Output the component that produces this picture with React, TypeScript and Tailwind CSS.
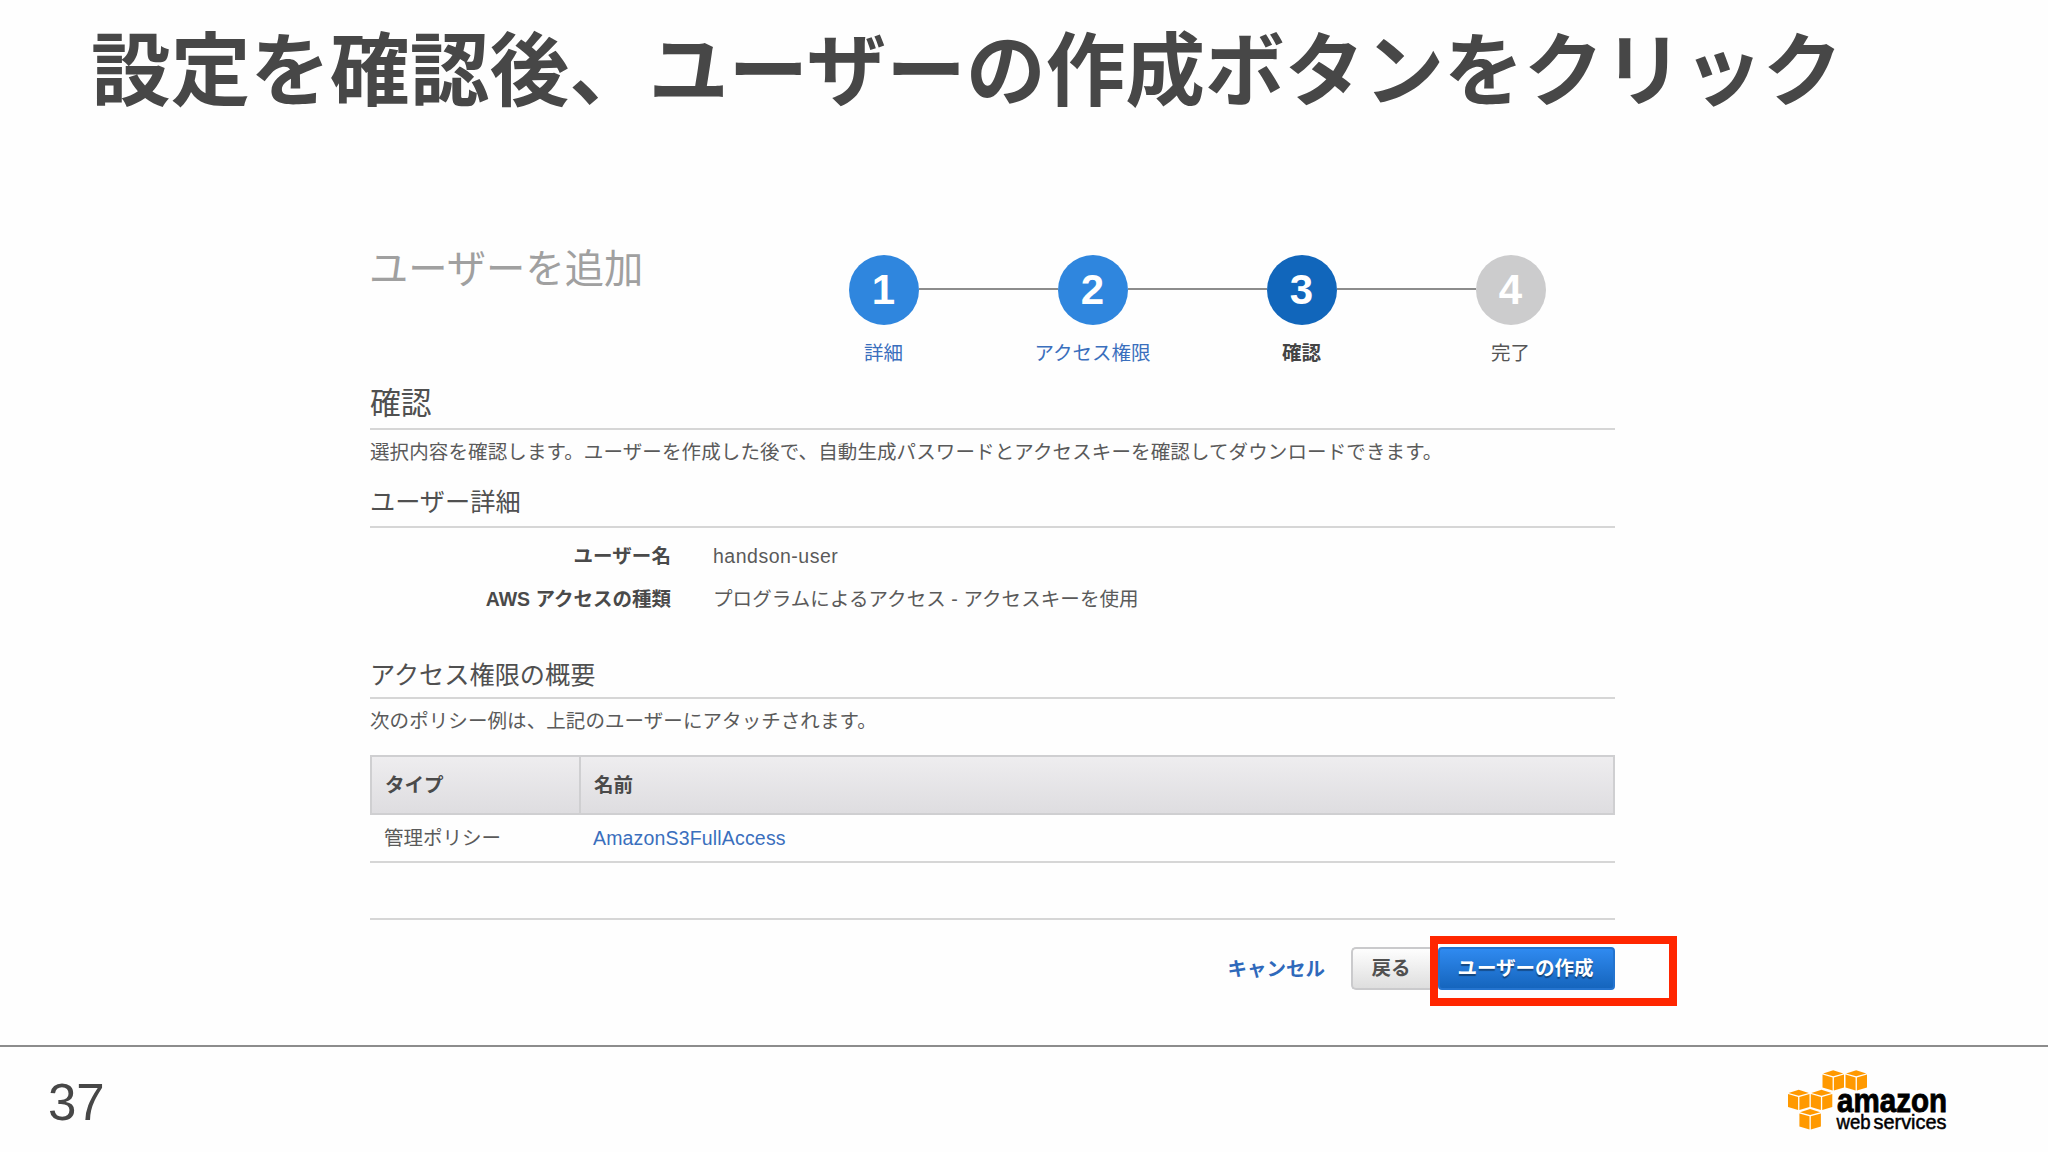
import React from 'react';

interface Step {
  num: number;
  label: string;
  circle: string;
  text: string;
}

const steps: Step[] = [
  { num: 1, label: '詳細', circle: 'bg-[#2f86de]', text: 'text-[#3a6fbd]' },
  { num: 2, label: 'アクセス権限', circle: 'bg-[#2f86de]', text: 'text-[#3a6fbd]' },
  { num: 3, label: '確認', circle: 'bg-[#1166bb]', text: 'text-[#444] font-bold' },
  { num: 4, label: '完了', circle: 'bg-[#cccccd]', text: 'text-[#555]' },
];

const cubes = [
  [34.5, 0],
  [57.5, 0],
  [0, 19.5],
  [22.8, 19.5],
  [11.4, 38.8],
];

const Stepper: React.FC = () => (
  <div className="flex w-[836px]">
    {steps.map((step, i) => (
      <div key={step.num} className="flex w-[209px] flex-col items-center">
        <div className="flex h-[70px] w-full items-center">
          <div className={i === 0 ? 'h-[2px] flex-1' : 'mb-[2px] h-[2px] flex-1 bg-[#8c8c8c]'} />
          <div
            className={`flex h-[70px] w-[70px] items-center justify-center rounded-full pb-[2px] text-[42px] font-bold text-white ${step.circle}`}
          >
            {step.num}
          </div>
          <div className={i === 3 ? 'h-[2px] flex-1' : 'mb-[2px] h-[2px] flex-1 bg-[#8c8c8c]'} />
        </div>
        <div className={`mt-[14px] h-7 leading-7 ${step.text}`}>{step.label}</div>
      </div>
    ))}
  </div>
);

const Logo: React.FC = () => (
  <svg className="h-[66px] w-[164px] overflow-visible" viewBox="0 0 164 66">
    {cubes.map(([x, y]) => (
      <g key={`${x}-${y}`} transform={`translate(${x} ${y})`} fill="#ff9900">
        <path d="M0.6 3.4 10.7 0.2 20.8 3.4 10.7 6.2Z" />
        <path d="M0 4.6 10.1 7.4V20.6L0 17.6Z" />
        <path d="M21.5 4.6 11.4 7.4V20.6L21.5 17.6Z" />
      </g>
    ))}
    <text
      x="49"
      y="41.5"
      fontSize="34"
      fontWeight="700"
      textLength="110"
      lengthAdjust="spacingAndGlyphs"
      stroke="#000"
      strokeWidth="0.9"
    >
      amazon
    </text>
    <text x="48.5" y="59" fontSize="20.5" textLength="34" lengthAdjust="spacingAndGlyphs" stroke="#000" strokeWidth="0.5">
      web
    </text>
    <text x="85.5" y="59" fontSize="20.5" textLength="73" lengthAdjust="spacingAndGlyphs" stroke="#000" strokeWidth="0.5">
      services
    </text>
  </svg>
);

export default function App() {
  return (
    <div className="flex h-[1152px] w-[2048px] flex-col overflow-hidden bg-[#fefefe] font-['Liberation_Sans','Noto_Sans_CJK_JP',sans-serif] text-[19.5px] text-[#5a5a5a]">
      <h1 className="ml-[91px] mt-[12px] h-[120px] whitespace-nowrap text-[79.7px] leading-[120px] font-bold text-[#474747]">
        設定を確認後、ユーザーの作成ボタンをクリック
      </h1>

      <main className="ml-[370px] mt-[98px] flex h-[815px] w-[1245px] flex-col">
        <div className="flex h-[149px] pt-[25px]">
          <h2 className="-ml-[1px] h-[30px] w-[410px] whitespace-nowrap text-[39.3px] leading-[29px] text-[#a0a0a0]">
            ユーザーを追加
          </h2>
          <Stepper />
        </div>

        <h3 className="h-[51px] border-b-2 border-[#d6d6d6] text-[30.8px] leading-[50px] text-[#505050]">確認</h3>
        <p className="mt-[7px] h-[30px] whitespace-nowrap leading-[30px] tracking-[0.12px]">
          選択内容を確認します。ユーザーを作成した後で、自動生成パスワードとアクセスキーを確認してダウンロードできます。
        </p>
        <h4 className="mt-[16px] h-[45px] border-b-2 border-[#d6d6d6] text-[25.2px] leading-[39px] text-[#505050]">
          ユーザー詳細
        </h4>

        <dl className="mt-[13px] grid grid-cols-[301px_1fr] gap-x-[42px] gap-y-[13px] leading-[30px]">
          <dt className="text-right font-bold tracking-[0.1px] text-[#4a4a4a]">ユーザー名</dt>
          <dd className="tracking-[0.5px]">handson-user</dd>
          <dt className="text-right font-bold text-[#4a4a4a]">AWS アクセスの種類</dt>
          <dd className="tracking-[0.08px]">プログラムによるアクセス - アクセスキーを使用</dd>
        </dl>

        <h4 className="mt-[41px] h-[44px] border-b-2 border-[#d6d6d6] text-[25.2px] leading-[40px] text-[#505050]">
          アクセス権限の概要
        </h4>
        <p className="mt-[7px] h-[30px] leading-[30px] tracking-[0.08px]">
          次のポリシー例は、上記のユーザーにアタッチされます。
        </p>

        <div className="mt-[19px] flex h-[60px] border-2 border-[#cfcfd1] bg-linear-to-b from-[#eeedef] to-[#dedde0] font-bold leading-[56px] text-[#4a4a4a]">
          <div className="w-[209px] border-r-2 border-[#cfcfd1] pl-[13px]">タイプ</div>
          <div className="pl-[13px]">名前</div>
        </div>
        <div className="flex h-[48px] border-b-2 border-[#d6d6d6] leading-[47px]">
          <div className="w-[223px] pl-[14px]">管理ポリシー</div>
          <a className="tracking-[0.17px] text-[#3a6fbd]">AmazonS3FullAccess</a>
        </div>
        <div className="h-[57px] border-b-2 border-[#d6d6d6]" />

        <div className="mt-[27px] flex h-[43px] justify-end text-[19.5px] font-bold">
          <a className="mr-[26px] leading-[44px] text-[#2f69bb]">キャンセル</a>
          <button className="h-[43px] w-[80px] rounded-l-[5px] border-2 border-r-0 border-[#cacacc] bg-linear-to-b from-[#fefefe] to-[#dedede] pr-[2px] text-[#505050]">
            戻る
          </button>
          <div className="relative ml-[7px]">
            <button className="h-[43px] w-[177px] rounded-[4px] border-2 border-[#2474cf] bg-linear-to-b from-[#2f8af0] to-[#1565bd] pr-[2px] text-white text-shadow-[0_2px_1px_#00000066]">
              ユーザーの作成
            </button>
            {/* highlight frame around the create button */}
            <div className="absolute -left-[8px] -top-[11px] h-[70px] w-[247px] border-8 border-[#ff2600]" />
          </div>
        </div>
      </main>

      <footer className="flex flex-1 justify-between border-t-2 border-[#8c8c8c]">
        <div className="ml-[48px] mt-[26px] text-[51px] leading-[60px] text-[#474747]">37</div>
        <div className="mr-[96px] mt-[23px] text-black">
          <Logo />
        </div>
      </footer>
    </div>
  );
}
